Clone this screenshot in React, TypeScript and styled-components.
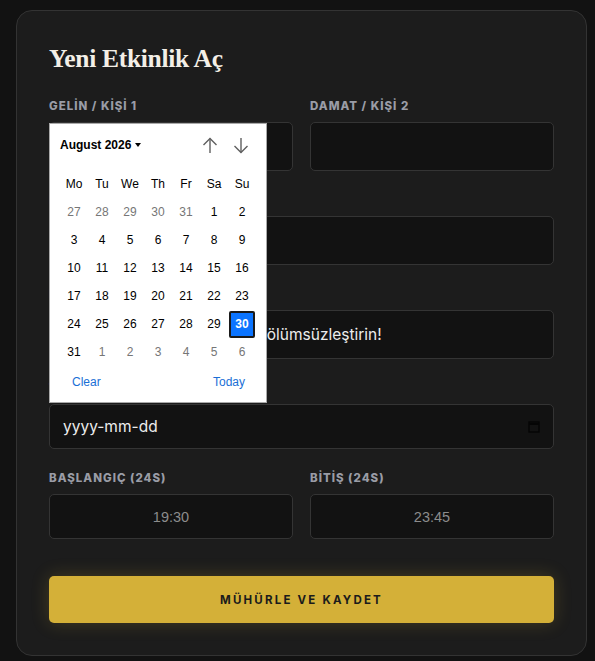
import React from "react";
import styled, { createGlobalStyle } from "styled-components";

const Global = createGlobalStyle`
  html, body { margin: 0; padding: 0; background: #121212; }
  * { box-sizing: border-box; }
`;

const Page = styled.div`
  padding: 10px 0 6px 16px;
  min-height: 661px;
  background: #121212;
`;

const Card = styled.div`
  width: 571px;
  background: #1c1c1c;
  border: 1px solid #333333;
  border-radius: 16px;
  padding: 32px;
`;

const Title = styled.h1`
  margin: 0 0 22px;
  font-family: "Liberation Serif", "DejaVu Serif", serif;
  font-weight: 700;
  font-size: 25.5px;
  line-height: 32px;
  letter-spacing: -0.3px;
  color: #f3efe7;
`;

const Form = styled.div`
  position: relative;
  display: flex;
  flex-direction: column;
  gap: 20px;
`;

const Row = styled.div`
  display: grid;
  grid-template-columns: 1fr 1fr;
  gap: 17px;
`;

const Field = styled.div`
  display: flex;
  flex-direction: column;
  gap: 9px;
`;

const Label = styled.div`
  font-family: Inter, "Noto Sans", sans-serif;
  font-size: 11.5px;
  line-height: 16px;
  padding-top: 1px;
  margin-bottom: -1px;
  font-weight: 800;
  letter-spacing: 1px;
  color: #9a9ca6;
`;

const Box = styled.div<{ $h?: number; $center?: boolean; $muted?: boolean }>`
  height: ${(p) => p.$h ?? 49}px;
  display: flex;
  align-items: center;
  justify-content: ${(p) => (p.$center ? "center" : "space-between")};
  padding: 0 13px;
  background: #121212;
  border: 1px solid #343434;
  border-radius: 5px;
  font-family: ${(p) =>
    p.$muted ? '"Liberation Sans", Arial, sans-serif' : 'Inter, "Noto Sans", sans-serif'};
  font-size: ${(p) => (p.$muted ? 14.5 : 15.5)}px;
  color: ${(p) => (p.$muted ? "#8c8c8c" : "#ececec")};
  white-space: nowrap;
  overflow: hidden;
`;

const Button = styled.button`
  margin-top: 17px;
  height: 47px;
  width: 100%;
  border: none;
  border-radius: 5px;
  background: #d4b038;
  box-shadow: 0 0 18px rgba(212, 176, 56, 0.22);
  font-family: Inter, "Noto Sans", sans-serif;
  font-weight: 700;
  font-size: 11.5px;
  letter-spacing: 2.2px;
  color: #1b1b1b;
  cursor: pointer;
`;

/* Calendar popover */
const Calendar = styled.div`
  position: absolute;
  top: 26px;
  left: 0;
  width: 218px;
  background: #ffffff;
  border: 1px solid #a9a9a9;
  padding: 7px 10px 6px;
  font-family: "Liberation Sans", Arial, sans-serif;
  font-size: 12px;
  color: #000;
  z-index: 5;
`;

const CalHeader = styled.div`
  height: 28px;
  display: flex;
  align-items: center;
  justify-content: space-between;
`;

const MonthLabel = styled.div`
  font-weight: 700;
  font-size: 12px;
  display: flex;
  align-items: center;
  gap: 4px;
`;

const Caret = styled.span`
  width: 0;
  height: 0;
  border-left: 3.5px solid transparent;
  border-right: 3.5px solid transparent;
  border-top: 4px solid #000;
`;

const Arrows = styled.div`
  display: flex;
  gap: 15px;
  margin-right: 7px;
`;

const Grid = styled.div`
  margin-top: 11px;
  display: grid;
  grid-template-columns: repeat(7, 28px);
  grid-auto-rows: 28px;
`;

const Cell = styled.div<{ $other?: boolean; $selected?: boolean }>`
  display: flex;
  align-items: center;
  justify-content: center;
  span {
    width: 26px;
    height: 27px;
    display: flex;
    align-items: center;
    justify-content: center;
    color: ${(p) => (p.$selected ? "#fff" : p.$other ? "#767676" : "#000")};
    font-weight: ${(p) => (p.$selected ? 700 : 400)};
    background: ${(p) => (p.$selected ? "#0b74ff" : "transparent")};
    border: ${(p) => (p.$selected ? "2px solid #1a1a1a" : "none")};
    border-radius: 2px;
  }
`;

const Footer = styled.div`
  margin-top: 2px;
  height: 28px;
  display: flex;
  align-items: center;
  justify-content: space-between;
  padding: 0 11px 0 12px;
  color: #1a6fd6;
  font-size: 12px;
`;

const Arrow = ({ down }: { down?: boolean }) => (
  <svg width="16" height="17" viewBox="0 0 16 17" fill="none">
    <g
      stroke="#5f5f5f"
      strokeWidth="1.4"
      transform={down ? "rotate(180 8 8.5)" : undefined}
    >
      <line x1="8" y1="1.5" x2="8" y2="16" />
      <polyline points="1.5,8 8,1.5 14.5,8" />
    </g>
  </svg>
);

const CalIcon = () => (
  <svg width="12" height="13" viewBox="0 0 12 13" fill="none">
    <rect x="1" y="2" width="10" height="10" stroke="#050505" strokeWidth="1.4" />
    <line x1="1" y1="4" x2="11" y2="4" stroke="#050505" strokeWidth="2" />
  </svg>
);

const weekdays = ["Mo", "Tu", "We", "Th", "Fr", "Sa", "Su"];

type Day = { n: number; other?: boolean; sel?: boolean };
const days: Day[] = [
  ...[27, 28, 29, 30, 31].map((n) => ({ n, other: true })),
  ...Array.from({ length: 31 }, (_, i) => ({ n: i + 1, sel: i + 1 === 30 })),
  ...[1, 2, 3, 4, 5, 6].map((n) => ({ n, other: true })),
];

export default function App() {
  return (
    <>
      <Global />
      <Page>
        <Card>
          <Title>Yeni Etkinlik Aç</Title>
          <Form>
            <Row>
              <Field>
                <Label>GELİN / KİŞİ 1</Label>
                <Box />
              </Field>
              <Field>
                <Label>DAMAT / KİŞİ 2</Label>
                <Box />
              </Field>
            </Row>
            <Field>
              <Label>ETKİNLİK ADI</Label>
              <Box />
            </Field>
            <Field>
              <Label>KARŞILAMA MESAJI</Label>
              <Box>Bu en özel anı sonsuza dek ölümsüzleştirin!</Box>
            </Field>
            <Field>
              <Label>TARİH</Label>
              <Box $h={45}>
                <span>yyyy-mm-dd</span>
                <CalIcon />
              </Box>
            </Field>
            <Row>
              <Field>
                <Label>BAŞLANGIÇ (24S)</Label>
                <Box $h={45} $center $muted>
                  19:30
                </Box>
              </Field>
              <Field>
                <Label>BİTİŞ (24S)</Label>
                <Box $h={45} $center $muted>
                  23:45
                </Box>
              </Field>
            </Row>
            <Button>MÜHÜRLE VE KAYDET</Button>

            <Calendar>
              <CalHeader>
                <MonthLabel>
                  August 2026 <Caret />
                </MonthLabel>
                <Arrows>
                  <Arrow />
                  <Arrow down />
                </Arrows>
              </CalHeader>
              <Grid>
                {weekdays.map((w) => (
                  <Cell key={w}>
                    <span>{w}</span>
                  </Cell>
                ))}
                {days.map((d, i) => (
                  <Cell key={i} $other={d.other} $selected={d.sel}>
                    <span>{d.n}</span>
                  </Cell>
                ))}
              </Grid>
              <Footer>
                <span>Clear</span>
                <span>Today</span>
              </Footer>
            </Calendar>
          </Form>
        </Card>
      </Page>
    </>
  );
}
